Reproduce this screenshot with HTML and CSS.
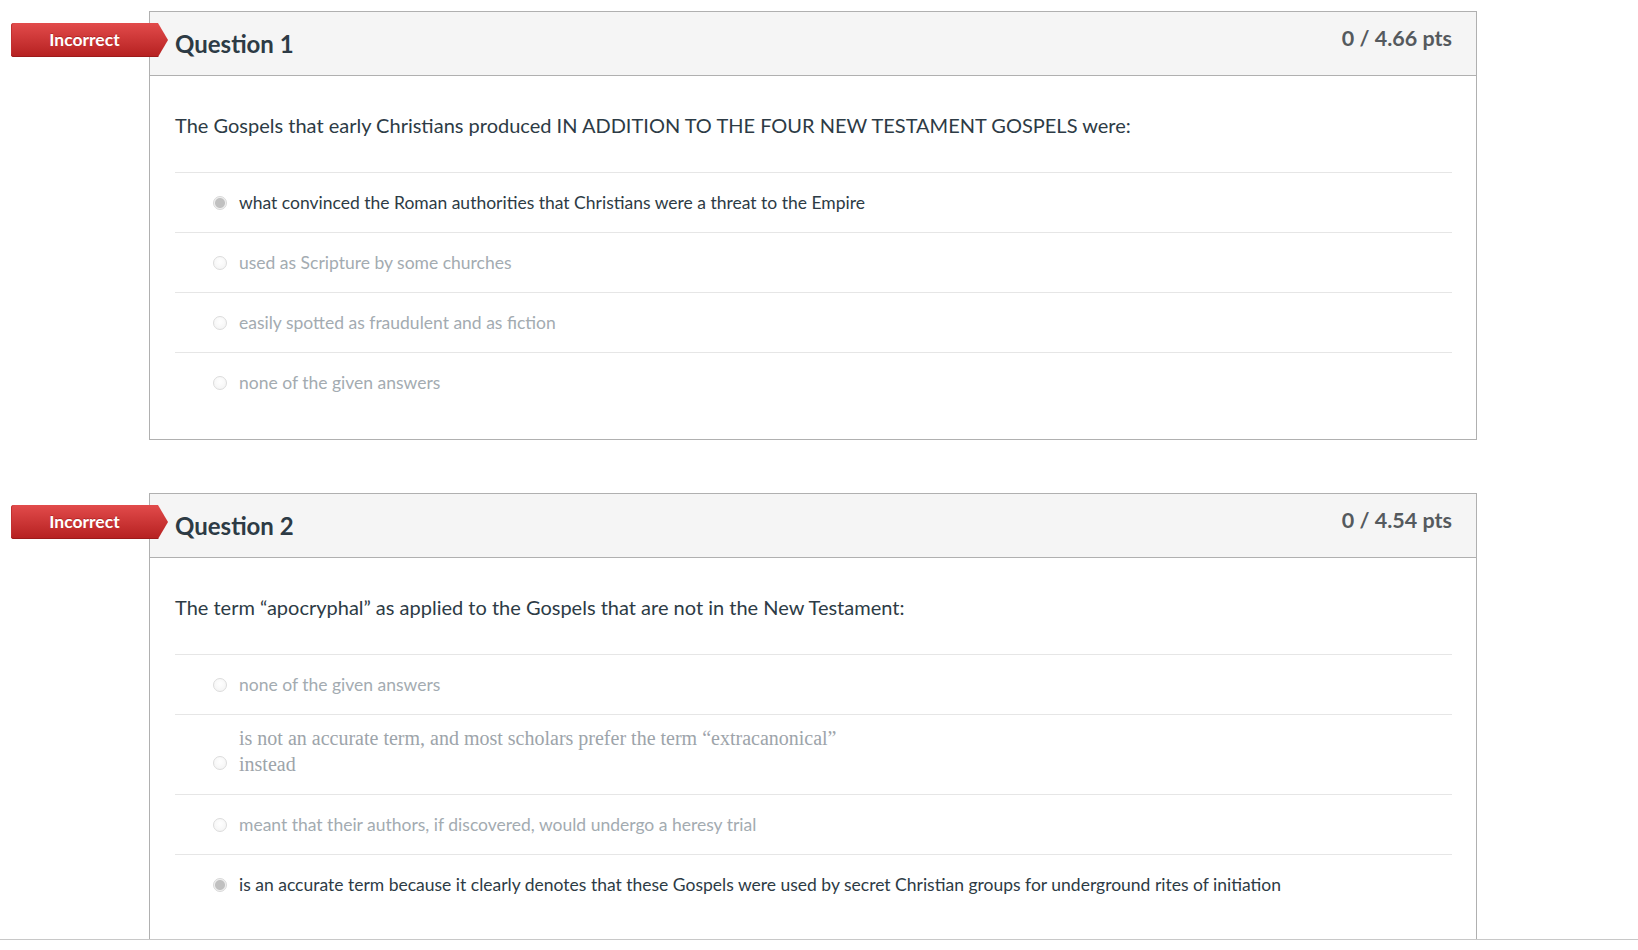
FILE: index.html
```html
<!DOCTYPE html>
<html lang="en">
<head>
<meta charset="utf-8">
<title>Quiz results</title>
<link rel="stylesheet" href="styles.css">
</head>
<body>
<main class="page">
  <section class="question">
    <div class="badge">Incorrect</div>
    <header class="question-header">
      <h2 class="question-name">Question 1</h2>
      <span class="points">0 / 4.66 pts</span>
    </header>
    <div class="question-body">
      <p class="question-text">The Gospels that early Christians produced IN ADDITION TO THE FOUR NEW TESTAMENT GOSPELS were:</p>
      <ul class="answers">
        <li class="answer is-selected"><span class="radio"></span><span class="answer-text">what convinced the Roman authorities that Christians were a threat to the Empire</span></li>
        <li class="answer"><span class="radio"></span><span class="answer-text">used as Scripture by some churches</span></li>
        <li class="answer"><span class="radio"></span><span class="answer-text">easily spotted as fraudulent and as fiction</span></li>
        <li class="answer"><span class="radio"></span><span class="answer-text">none of the given answers</span></li>
      </ul>
    </div>
  </section>

  <section class="question">
    <div class="badge">Incorrect</div>
    <header class="question-header">
      <h2 class="question-name">Question 2</h2>
      <span class="points">0 / 4.54 pts</span>
    </header>
    <div class="question-body">
      <p class="question-text">The term “apocryphal” as applied to the Gospels that are not in the New Testament:</p>
      <ul class="answers">
        <li class="answer"><span class="radio"></span><span class="answer-text">none of the given answers</span></li>
        <li class="answer answer-multiline"><span class="radio"></span><span class="answer-text answer-serif">is not an accurate term, and most scholars prefer the term “extracanonical”<br>instead</span></li>
        <li class="answer"><span class="radio"></span><span class="answer-text">meant that their authors, if discovered, would undergo a heresy trial</span></li>
        <li class="answer is-selected"><span class="radio"></span><span class="answer-text">is an accurate term because it clearly denotes that these Gospels were used by secret Christian groups for underground rites of initiation</span></li>
      </ul>
    </div>
  </section>
</main>
</body>
</html>
```

FILE: styles.css
```css
html, body {
  margin: 0;
  padding: 0;
  background: #fff;
}

body {
  font-family: Lato, "Noto Sans", sans-serif;
  color: #2d3b45;
}

/* visible area of the results page, cut off by a thin rule */
.page {
  height: 940px;
  overflow: hidden;
  border-bottom: 1px solid #c8c8c8;
  padding-top: 11px;
  box-sizing: border-box;
}

.question {
  position: relative;
  margin: 0 0 53px 149px;
  width: 1328px;
  box-sizing: border-box;
  border: 1px solid #b0b0b0;
  background: #fff;
}

/* red "Incorrect" flag hanging off the left edge of the card */
.badge {
  position: absolute;
  left: -139px;
  top: 11px;
  width: 157px;
  height: 34px;
  border-radius: 3px 0 0 3px;
  clip-path: polygon(0 0, 147px 0, 157px 50%, 147px 100%, 0 100%);
  background: linear-gradient(#e24b4b, #b52020);
  box-shadow: inset 0 -1px 0 #9d1a1a, inset 1px 0 0 #c03030;
  color: #fff;
  font-weight: 700;
  font-size: 17.5px;
  line-height: 34px;
  padding-right: 10px;
  box-sizing: border-box;
  text-align: center;
  text-shadow: 0 -1px 0 rgba(120, 0, 0, 0.35);
}

.question-header {
  height: 63px;
  background: #f5f5f5;
  border-bottom: 1px solid #b0b0b0;
  display: flex;
  justify-content: space-between;
  align-items: flex-start;
  padding: 0 24px 0 25px;
}

.question-name {
  margin: 0;
  padding-top: 16px;
  font-size: 24px;
  line-height: 32px;
  font-weight: 700;
  color: #2d3b45;
}

.points {
  padding-top: 13px;
  font-size: 21.5px;
  line-height: 26px;
  font-weight: 700;
  color: #555a5e;
}

.question-body {
  padding: 0 24px 27px 25px;
}

.question-text {
  margin: 36px 0 34px;
  font-size: 20px;
  line-height: 26px;
}

.answers {
  list-style: none;
  margin: 0;
  padding: 0;
}

.answer {
  display: flex;
  align-items: center;
  min-height: 60px;
  padding: 14px 0;
  box-sizing: border-box;
  border-top: 1px solid #e6e6e6;
  font-size: 17.5px;
  line-height: 24px;
  color: #a3abb1;
}

.answer.is-selected {
  color: #2d3b45;
}

.radio {
  flex: none;
  width: 14px;
  height: 14px;
  box-sizing: border-box;
  margin: 0 12px 0 38px;
  border-radius: 50%;
  border: 1px solid #dcdcdc;
  background: radial-gradient(circle at 50% 40%, #ffffff, #f2f2f2);
}

.answer.is-selected .radio {
  border-color: #d8d8d8;
  background: radial-gradient(circle, #c0c0c0 0 4.5px, #f0f0f0 5.5px);
}

/* two-line answer: text sits high, radio lines up with the last line */
.answer-multiline {
  align-items: flex-start;
  min-height: 80px;
  padding: 10px 0 16px;
}

.answer-multiline .radio {
  margin-top: 31px;
}

.answer-serif {
  font-family: "Liberation Serif", "Times New Roman", serif;
  font-size: 20px;
  line-height: 26px;
  color: #9da4aa;
}
```
